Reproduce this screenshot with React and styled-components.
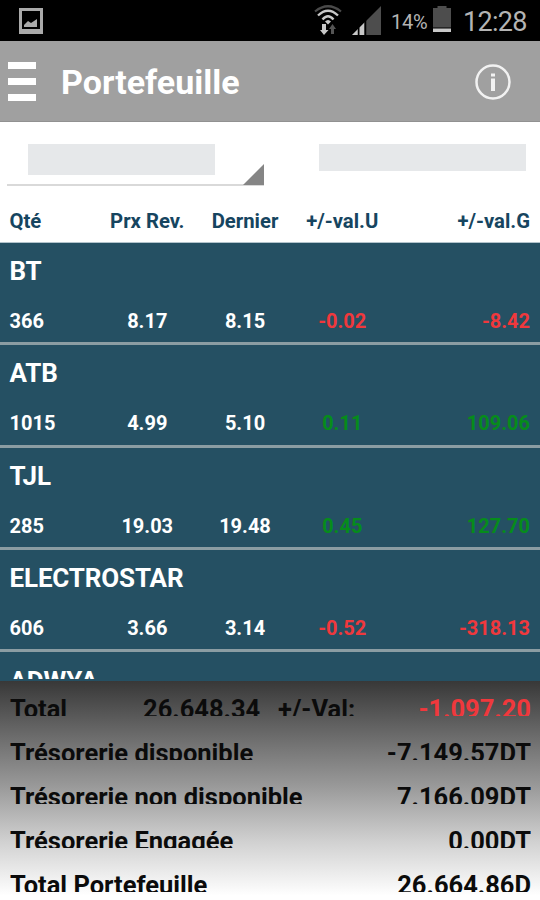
import React from 'react';
import styled, { createGlobalStyle } from 'styled-components';

const GlobalStyle = createGlobalStyle`
  * {
    box-sizing: border-box;
  }

  body {
    margin: 0;
    background: #fff;
    font-family: Roboto, 'Liberation Sans', sans-serif;
  }
`;

const Screen = styled.div`
  display: flex;
  flex-direction: column;
  width: 540px;
  height: 900px;
  overflow: hidden;
  background: #fff;
`;

const StatusBar = styled.div`
  display: flex;
  align-items: flex-start;
  height: 41px;
  flex: none;
  padding-left: 19px;
  background: #000;
  color: #b4b4b4;

  svg {
    display: block;
    flex: none;
  }
`;

const StatusIcons = styled.div`
  display: flex;
  margin-left: auto;
  padding-right: 13px;
`;

const BatteryLevel = styled.span`
  width: 37px;
  margin: 0 5px 0 10px;
  font-size: 20px;
  line-height: 44px;
  letter-spacing: -0.3px;
  white-space: nowrap;
`;

const Clock = styled.span`
  width: 64px;
  margin-left: 12px;
  font-size: 27px;
  line-height: 44px;
  letter-spacing: -0.7px;
  white-space: nowrap;
`;

const AppBar = styled.header`
  display: flex;
  align-items: center;
  height: 81px;
  flex: none;
  padding: 1px 29px 0 8px;
  background: #a0a0a0;
  border-bottom: 1px solid #919191;
`;

const MenuButton = styled.div`
  display: flex;
  flex-direction: column;
  gap: 9px;

  span {
    width: 28px;
    height: 7px;
    background: #fff;
  }
`;

const Title = styled.h1`
  margin: 0 auto 0 25px;
  color: #fff;
  font-size: 34px;
  line-height: 40px;
  font-weight: 700;
`;

const Filters = styled.div`
  display: flex;
  justify-content: space-between;
  align-items: flex-start;
  height: 77px;
  flex: none;
  padding: 14px 14px 0 7px;
`;

const Select = styled.div`
  display: flex;
  justify-content: space-between;
  align-items: flex-end;
  width: 257px;
  height: 50px;
  padding: 0 0 1px 21px;
  border-bottom: 2px solid #d9d9d9;
`;

const Placeholder = styled.div`
  width: ${props => props.$width}px;
  height: ${props => props.$height}px;
  margin-top: 8px;
  align-self: flex-start;
  background: #e6e8ea;
`;

const Caret = styled.div`
  width: 21px;
  height: 21px;
  margin-bottom: -2px;
  background: #858585;
  clip-path: polygon(100% 0, 100% 100%, 0 100%);
`;

const Columns = styled.div`
  display: grid;
  grid-template-columns: 88.5px 98.5px 97px 97.5px 139px;
  padding: 0 9.5px;
`;

const TableHead = styled(Columns)`
  height: 44px;
  flex: none;
  color: #164560;
  font-size: 20.3px;
  line-height: 44px;
  font-weight: 700;
  border-bottom: 1px solid #b3c4cc;
`;

const Cell = styled.span`
  text-align: ${props => props.$align || 'center'};
  color: ${props => props.$color || 'inherit'};
  white-space: nowrap;
`;

const List = styled.div`
  height: 438px;
  flex: none;
  overflow: hidden;
  background: #255063;
  color: #fff;
  font-weight: 700;
`;

const Holding = styled.div`
  height: 102.3px;
  border-bottom: 3px solid #8b9da3;
`;

const Symbol = styled.div`
  height: 55px;
  padding-left: 9.5px;
  font-size: 26px;
  line-height: 57px;
  letter-spacing: -0.15px;
`;

const Values = styled(Columns)`
  font-size: 20px;
  line-height: 47px;
`;

/* the last symbol is cut a little above the end of the list */
const PartialHolding = styled.div`
  height: 26.5px;
  padding-top: 1px;
  overflow: hidden;
`;

const Summary = styled.footer`
  display: flex;
  flex-direction: column;
  gap: 20px;
  flex: 1;
  padding: 11px 9px 0 10px;
  background: linear-gradient(#383838 0, #737373 29%, #999 48%, #d0d0d0 73%, #fff 98%);
`;

const SummaryRow = styled.div`
  display: flex;
  justify-content: space-between;
  height: 24px;
  flex: none;
  overflow: hidden;
  color: #0b0b0b;
  font-size: 25.5px;
  line-height: 35px;
  font-weight: 700;
  white-space: nowrap;
`;

const TotalRow = styled(SummaryRow)`
  display: grid;
  grid-template-columns: 133px 135px 1fr auto;
`;

const RED = '#f0383c';
const GREEN = '#068c1b';

const holdings = [
  { symbol: 'BT', qty: '366', cost: '8.17', last: '8.15', unit: '-0.02', global: '-8.42' },
  { symbol: 'ATB', qty: '1015', cost: '4.99', last: '5.10', unit: '0.11', global: '109.06' },
  { symbol: 'TJL', qty: '285', cost: '19.03', last: '19.48', unit: '0.45', global: '127.70' },
  { symbol: 'ELECTROSTAR', qty: '606', cost: '3.66', last: '3.14', unit: '-0.52', global: '-318.13' },
];

const balances = [
  ['Trésorerie disponible', '-7.149.57DT'],
  ['Trésorerie non disponible', '7.166.09DT'],
  ['Trésorerie Engagée', '0.00DT'],
  ['Total Portefeuille', '26.664.86D'],
];

const valueColor = value => (value.startsWith('-') ? RED : GREEN);

const PictureIcon = () => (
  <svg width="24" height="41" viewBox="0 0 24 41">
    <path d="M0 8h24v26H0zM3 11v18h18V11z" fill="#aaa" fillRule="evenodd" />
    <path d="M5 27v-2l4-4 3 2 6-4v8z" fill="#aaa" />
  </svg>
);

const WifiIcon = () => (
  <svg width="28" height="41" viewBox="0 0 28 41" fill="none">
    <path d="M1 11.500Q14 1 27 11.500" stroke="#4a4a4a" strokeWidth="2.2" />
    <path d="M4 15.500Q14 6 24 15.500M8.500 19.500Q14 13 19.500 19.500" stroke="#c8c8c8" strokeWidth="2.4" />
    <path d="M11 21.500q3-3 6 0l-3 3z" fill="#c8c8c8" />
    <path d="M8 24h4v6h2.500l-4.500 5-4-5h2z" fill="#c8c8c8" />
    <path d="M17 34v-5h-2l3.500-5 3.500 5h-2v5z" fill="#555" />
  </svg>
);

const SignalIcon = () => (
  <svg width="29" height="41" viewBox="0 0 29 41">
    <path d="M0 35 29 6v29z" fill="#4d4d4d" />
    <path d="M0 35l6-6v6zM7.500 35v-7.500l4.500-4.500v12z" fill="#c8c8c8" />
    <path d="M6.500 25v10M13.500 19v16" stroke="#000" strokeWidth="1.5" />
  </svg>
);

const BatteryIcon = () => (
  <svg width="18" height="41" viewBox="0 0 18 41">
    <path d="M0 8h4.500V6h9v2H18v19.500H0z" fill="#4d4d4d" />
    <path d="M0 28.500h18V32H0z" fill="#c8c8c8" />
  </svg>
);

const InfoIcon = () => (
  <svg width="36" height="36" viewBox="0 0 36 36">
    <circle cx="18" cy="18" r="16.500" fill="none" stroke="#f2f2f2" strokeWidth="2.500" />
    <path d="M16 9.500h4v3h-4zM16 14.500h4V27h-4z" fill="#f2f2f2" />
  </svg>
);

const App = () => {
  return (
    <>
      <GlobalStyle />
      <Screen>
        <StatusBar>
          <PictureIcon />
          <StatusIcons>
            <WifiIcon />
            <svg width="10" height="41" />
            <SignalIcon />
            <BatteryLevel>14%</BatteryLevel>
            <BatteryIcon />
            <Clock>12:28</Clock>
          </StatusIcons>
        </StatusBar>

        <AppBar>
          <MenuButton>
            <span />
            <span />
            <span />
          </MenuButton>
          <Title>Portefeuille</Title>
          <InfoIcon />
        </AppBar>

        <Filters>
          <Select>
            <Placeholder $width={187} $height={31} />
            <Caret />
          </Select>
          <Placeholder $width={207} $height={27} />
        </Filters>

        <TableHead>
          <Cell $align="left">Qté</Cell>
          <Cell>Prx Rev.</Cell>
          <Cell>Dernier</Cell>
          <Cell>+/-val.U</Cell>
          <Cell $align="right">+/-val.G</Cell>
        </TableHead>

        <List>
          {holdings.map(item => (
            <Holding key={item.symbol}>
              <Symbol>{item.symbol}</Symbol>
              <Values>
                <Cell $align="left">{item.qty}</Cell>
                <Cell>{item.cost}</Cell>
                <Cell>{item.last}</Cell>
                <Cell $color={valueColor(item.unit)}>{item.unit}</Cell>
                <Cell $align="right" $color={valueColor(item.global)}>{item.global}</Cell>
              </Values>
            </Holding>
          ))}
          <PartialHolding>
            <Symbol>ADWYA</Symbol>
          </PartialHolding>
        </List>

        <Summary>
          <TotalRow>
            <span>Total</span>
            <span>26.648.34</span>
            <span>+/-Val:</span>
            <Cell $color={RED}>-1.097.20</Cell>
          </TotalRow>
          {balances.map(([label, amount]) => (
            <SummaryRow key={label}>
              <span>{label}</span>
              <span>{amount}</span>
            </SummaryRow>
          ))}
        </Summary>
      </Screen>
    </>
  );
};

export default App;
